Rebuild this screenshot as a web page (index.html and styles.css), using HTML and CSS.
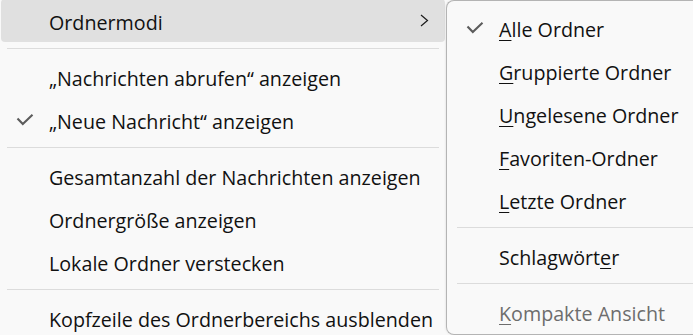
FILE: index.html
```html
<!DOCTYPE html>
<html lang="de">
<head>
<meta charset="utf-8">
<title>Ordnermodi</title>
<link rel="stylesheet" href="styles.css">
</head>
<body>
<div class="stage">
  <div class="menu main">
    <div class="item active">
      <span class="slot"></span>
      <span class="label">Ordnermodi</span>
      <svg class="chev" width="9" height="13" viewBox="0 0 9 13"><polyline points="1,1 7.5,6.5 1,12" fill="none" stroke="#1b1b1b" stroke-width="1.2"/></svg>
    </div>
    <div class="sep"></div>
    <div class="item"><span class="slot"></span><span class="label">„Nachrichten abrufen“ anzeigen</span></div>
    <div class="item"><span class="slot"><svg class="check" width="18" height="13" viewBox="0 0 18 13"><polyline points="1.5,5.5 6.8,11 16.5,1.8" fill="none" stroke="#5c5c5c" stroke-width="2.1"/></svg></span><span class="label">„Neue Nachricht“ anzeigen</span></div>
    <div class="sep"></div>
    <div class="item"><span class="slot"></span><span class="label">Gesamtanzahl der Nachrichten anzeigen</span></div>
    <div class="item"><span class="slot"></span><span class="label">Ordnergröße anzeigen</span></div>
    <div class="item"><span class="slot"></span><span class="label">Lokale Ordner verstecken</span></div>
    <div class="sep"></div>
    <div class="item"><span class="slot"></span><span class="label">Kopfzeile des Ordnerbereichs ausblenden</span></div>
  </div>
  <div class="menu sub">
    <div class="item"><span class="slot"><svg class="check" width="18" height="13" viewBox="0 0 18 13"><polyline points="1.5,5.5 6.8,11 16.5,1.8" fill="none" stroke="#5c5c5c" stroke-width="2.1"/></svg></span><span class="label"><u>A</u>lle Ordner</span></div>
    <div class="item"><span class="slot"></span><span class="label"><u>G</u>ruppierte Ordner</span></div>
    <div class="item"><span class="slot"></span><span class="label"><u>U</u>ngelesene Ordner</span></div>
    <div class="item"><span class="slot"></span><span class="label"><u>F</u>avoriten-Ordner</span></div>
    <div class="item"><span class="slot"></span><span class="label"><u>L</u>etzte Ordner</span></div>
    <div class="sep"></div>
    <div class="item"><span class="slot"></span><span class="label">Schlagwört<u>e</u>r</span></div>
    <div class="sep"></div>
    <div class="item disabled"><span class="slot"></span><span class="label"><u>K</u>ompakte Ansicht</span></div>
  </div>
</div>
</body>
</html>
```
FILE: styles.css
```css
html, body {
  margin: 0;
  padding: 0;
  background: #f9f9f9;
  overflow: hidden;
}
body {
  width: 693px;
  height: 335px;
  font-family: "Segoe UI", "Open Sans", "Noto Sans", sans-serif;
  font-size: 19.7px;
  color: #111111;
}
.stage {
  display: flex;
  align-items: flex-start;
}
.menu {
  background: #f9f9f9;
  display: flex;
  flex-direction: column;
}
.main {
  width: 444px;
  flex: 0 0 444px;
  padding: 0 1px;
  margin-top: -1px;
}
.sub {
  flex: 1 1 auto;
  min-width: 0;
  border: 1px solid #b4b4b4;
  border-right: none;
  border-radius: 8px 0 0 8px;
  padding: 5px 0 1px 4px;
  box-shadow: -1px 0 2px rgba(0, 0, 0, 0.06);
  overflow: hidden;
}
.sub .sep {
  margin-right: 0;
}
.item {
  height: 43px;
  display: flex;
  align-items: center;
  padding-top: 3px;
  box-sizing: border-box;
  border-radius: 4px;
  white-space: nowrap;
}
.item.active {
  background: #e0e0e0;
}
.slot {
  width: 48px;
  flex: 0 0 48px;
  box-sizing: border-box;
  padding-left: 15px;
  display: flex;
  align-items: center;
  margin-top: -3px;
}
.label {
  flex: 1 1 auto;
}
.chev {
  margin-right: 16px;
  margin-top: -3px;
}
.sep {
  height: 1px;
  background: #dcdcdc;
  margin: 6px 6px;
}
u {
  text-decoration-thickness: 1px;
  text-underline-offset: 3px;
}
.disabled {
  color: #6d6d6d;
}
```
